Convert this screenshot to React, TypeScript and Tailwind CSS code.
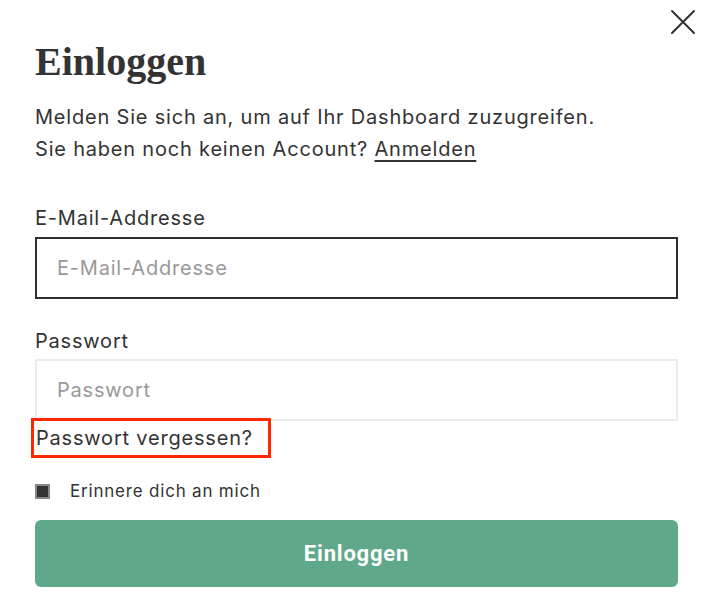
import { useState } from "react";

function CloseIcon() {
    return (
        <svg width="28" height="28" viewBox="0 0 28 28" fill="none" stroke="#333" strokeWidth="2" strokeLinecap="round">
            <path d="M3 3 L25 25 M25 3 L3 25" />
        </svg>
    );
}

function App() {
    const [merken, setMerken] = useState(true);

    return (
        <div className="w-[706px] h-[612px] bg-white text-[#333] font-['Inter',sans-serif] tracking-[0.8px] overflow-hidden">
            <div className="flex justify-end pt-[8px] pr-[9px] h-[36px]">
                <button type="button" aria-label="Schließen">
                    <CloseIcon />
                </button>
            </div>

            <div className="pl-[35px] pr-[28px] flex flex-col">
                <h1 className="font-['Liberation_Serif',serif] font-bold tracking-normal text-[40px] leading-[48px] mt-[2px]">
                    Einloggen
                </h1>

                <p className="text-[20px] leading-[32px] mt-[15px]">
                    Melden Sie sich an, um auf Ihr Dashboard zuzugreifen.
                    <br />
                    Sie haben noch keinen Account?{" "}
                    <a href="#" className="underline underline-offset-4">Anmelden</a>
                </p>

                <label htmlFor="email" className="text-[20px] leading-[28px] mt-[39px]">
                    E-Mail-Addresse
                </label>
                <input
                    id="email"
                    type="email"
                    placeholder="E-Mail-Addresse"
                    className="mt-[5px] h-[62px] border-2 border-[#2e2e2e] px-[20px] text-[20px] placeholder:text-[#999] outline-none"
                />

                <label htmlFor="passwort" className="text-[20px] leading-[28px] mt-[28px]">
                    Passwort
                </label>
                <input
                    id="passwort"
                    type="password"
                    placeholder="Passwort"
                    className="mt-[4px] h-[62px] border-2 border-[#ebebeb] px-[20px] text-[20px] placeholder:text-[#999] outline-none"
                />

                <div>
                    <a
                        href="#"
                        className="inline-block h-[34px] -ml-[1px] text-[20px] leading-[34px] pl-[2px] pr-[15px] outline-[3px] outline-solid outline-[#ff2600] relative"
                    >
                        Passwort vergessen?
                    </a>
                </div>

                <label className="flex items-center mt-[24px] cursor-pointer">
                    <span
                        onClick={() => setMerken(!merken)}
                        className={`w-[15px] h-[15px] border-2 border-[#888] ${merken ? "bg-[#333]" : "bg-white"}`}
                    />
                    <span className="ml-[20px] text-[17px] leading-[24px]">Erinnere dich an mich</span>
                </label>

                <button
                    type="submit"
                    className="mt-[17px] h-[67px] rounded-[6px] bg-[#5fa88a] text-white font-['Roboto',sans-serif] font-bold text-[22px]"
                >
                    Einloggen
                </button>
            </div>
        </div>
    );
}

export default App;
